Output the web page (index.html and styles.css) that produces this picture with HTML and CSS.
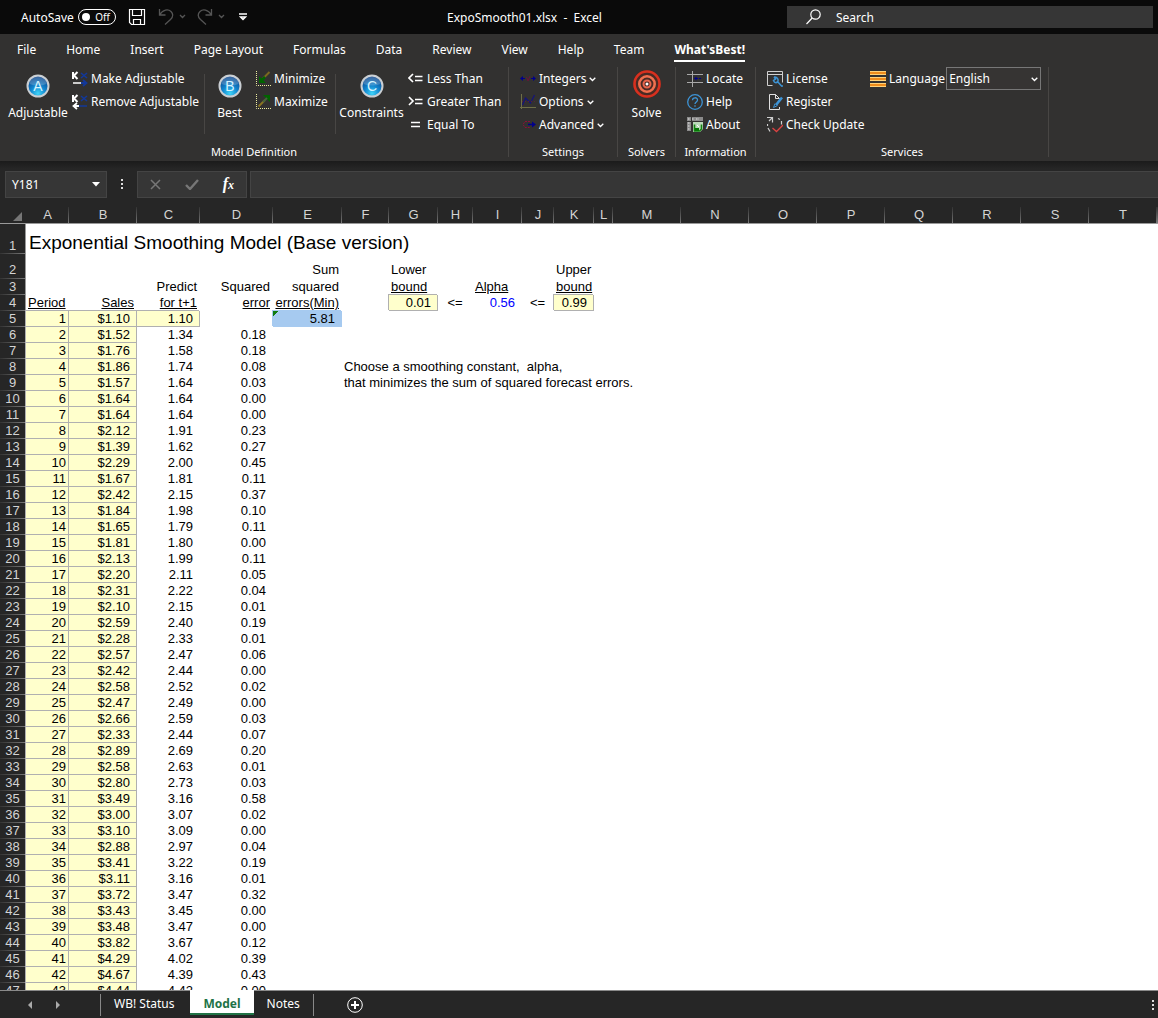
FILE: index.html
```html
<!DOCTYPE html>
<html lang="en">
<head>
  <meta charset="UTF-8">
  <title>ExpoSmooth01.xlsx - Excel</title>
  <link rel="stylesheet" href="styles.css">
</head>
<body>
<header class="titlebar">
  <div class="quick-access">
    <span>AutoSave</span>
    <button class="toggle" aria-label="AutoSave off"><span class="knob"></span>Off</button>
    <button class="icon-btn" aria-label="Save">
      <svg width="18" height="18" viewBox="0 0 18 18" fill="none" stroke="#fff" stroke-width="1.2"><path d="M1.5 1.5h15v15h-13l-2-2zM4.5 1.5v6h9v-6M5.500 16.500v-5h7v5"/></svg>
    </button>
    <button class="icon-btn undo" aria-label="Undo">
      <svg width="28" height="18" viewBox="0 0 28 18" fill="none" stroke="#555" stroke-width="1.3"><path d="M1.500 1v6h6M1.500 7C5 1.500 10 .8 13 3.500c3 3 1.500 6-.5 8L7 16.500M22 7l2.500 2.500L27 7"/></svg>
    </button>
    <button class="icon-btn redo" aria-label="Redo">
      <svg width="28" height="18" viewBox="0 0 28 18" fill="none" stroke="#555" stroke-width="1.3"><path d="M14.500 1v6h-6M14.500 7C11 1.500 6 .8 3 3.500c-3 3-1.500 6 .5 8L9 16.500M22 7l2.500 2.500L27 7"/></svg>
    </button>
    <button class="icon-btn" aria-label="Customize Quick Access Toolbar">
      <svg width="8" height="8" viewBox="0 0 8 8" fill="none" stroke="#fff" stroke-width="1.3"><path d="M0 1h8M1.500 4L4 6.500 6.500 4z"/></svg>
    </button>
  </div>
  <div class="doc-name">ExpoSmooth01.xlsx&nbsp; -&nbsp; Excel</div>
  <label class="search">
    <svg width="16" height="16" viewBox="0 0 16 16" fill="none" stroke="#fff" stroke-width="1.2"><circle cx="9.500" cy="5.500" r="4.700"/><path d="M6.200 9L.5 15"/></svg>
    <input type="text" placeholder="Search" aria-label="Search">
  </label>
</header>

<section class="ribbon">
  <nav class="tabs">
    <a href="#">File</a>
    <a href="#">Home</a>
    <a href="#">Insert</a>
    <a href="#">Page Layout</a>
    <a href="#">Formulas</a>
    <a href="#">Data</a>
    <a href="#">Review</a>
    <a href="#">View</a>
    <a href="#">Help</a>
    <a href="#">Team</a>
    <a href="#" class="active">What'sBest!</a>
  </nav>
  <div class="groups">
    <div class="group model">
      <div class="parts">
        <div class="part adjustable">
          <button class="big">
            <svg width="24" height="24" viewBox="0 0 24 24">
              <defs>
                <radialGradient id="orb" cx=".5" cy=".85" r=".8">
                  <stop offset="0" stop-color="#3fd4f8"/>
                  <stop offset=".45" stop-color="#1186cf"/>
                  <stop offset="1" stop-color="#0a3f86"/>
                </radialGradient>
              </defs>
              <circle cx="12" cy="12" r="10.500" fill="url(#orb)" stroke="#c9ced2" stroke-width="2"/>
              <path d="M3.500 10a8.500 8.500 0 0 1 17 0q-8.500 3-17 0z" fill="#fff" opacity=".2"/>
              <text class="orb-letter" x="12" y="17">A</text>
            </svg>
            Adjustable
          </button>
          <div class="smalls">
            <button class="small">
              <svg width="16" height="16" viewBox="0 0 16 16" fill="none"><path d="M1 1v7M5.500 1L2 4.500 5.500 8" stroke="#fff" stroke-width="2"/><path d="M9 2l6 5M15 2L9 7" stroke="#12389a" stroke-width="1.600"/><path d="M1 12h9" stroke="#fff" stroke-width="1.500"/><path d="M9 12h5M11 9l3.500 3-3.500 3" stroke="#12389a" stroke-width="1.800"/></svg>
              Make Adjustable
            </button>
            <button class="small">
              <svg width="16" height="16" viewBox="0 0 16 16" fill="none"><path d="M1 1v7M5.500 1L2 4.500 5.500 8" stroke="#fff" stroke-width="2"/><path d="M9 2l6 5M15 2L9 7" stroke="#12389a" stroke-width="1.600"/><path d="M7 12h8" stroke="#12389a" stroke-width="1.500"/><path d="M7 12H2M5 9l-3.500 3L5 15" stroke="#fff" stroke-width="1.800"/></svg>
              Remove Adjustable
            </button>
          </div>
        </div>
        <div class="part best">
          <button class="big">
            <svg width="24" height="24" viewBox="0 0 24 24">
              <circle cx="12" cy="12" r="10.500" fill="url(#orb)" stroke="#c9ced2" stroke-width="2"/>
              <path d="M3.500 10a8.500 8.500 0 0 1 17 0q-8.500 3-17 0z" fill="#fff" opacity=".2"/>
              <text class="orb-letter" x="12" y="17">B</text>
            </svg>
            Best
          </button>
          <div class="smalls">
            <button class="small">
              <svg width="16" height="16" viewBox="0 0 16 16" fill="none"><path d="M1.500 0v14.500H16" stroke="#eeeea0" stroke-dasharray="1 1"/><path d="M14.500 1L8 7.500" stroke="#7a6a20" stroke-width="2"/><path d="M4 5v7h7z" fill="#006400"/><path d="M10 6L6 10" stroke="#006400" stroke-width="2.500"/></svg>
              Minimize
            </button>
            <button class="small">
              <svg width="16" height="16" viewBox="0 0 16 16" fill="none"><path d="M1.500 0v14.500H16" stroke="#eeeea0" stroke-dasharray="1 1"/><path d="M3.500 12.500L10 6" stroke="#8a7420" stroke-width="2"/><path d="M8 1h7v7z" fill="#006400"/><path d="M8 8l4-4" stroke="#45633a" stroke-width="2"/></svg>
              Maximize
            </button>
          </div>
        </div>
        <div class="part constraints">
          <button class="big">
            <svg width="24" height="24" viewBox="0 0 24 24">
              <circle cx="12" cy="12" r="10.500" fill="url(#orb)" stroke="#c9ced2" stroke-width="2"/>
              <path d="M3.500 10a8.500 8.500 0 0 1 17 0q-8.500 3-17 0z" fill="#fff" opacity=".2"/>
              <text class="orb-letter" x="12" y="17">C</text>
            </svg>
            Constraints
          </button>
          <div class="smalls">
            <button class="small">
              <svg width="16" height="16" viewBox="0 0 16 16" fill="none" stroke="#fff" stroke-width="1.700"><path d="M5 3L1 7l4 4M7 5.500h7.500M7 9.500h7.500"/></svg>
              Less Than
            </button>
            <button class="small">
              <svg width="16" height="16" viewBox="0 0 16 16" fill="none" stroke="#fff" stroke-width="1.700"><path d="M1 3l4 4-4 4M7 5.500h7.500M7 9.500h7.500"/></svg>
              Greater Than
            </button>
            <button class="small">
              <svg width="16" height="16" viewBox="0 0 16 16" fill="none" stroke="#fff" stroke-width="1.700"><path d="M3 5.500h9M3 9.500h9"/></svg>
              Equal To
            </button>
          </div>
        </div>
      </div>
      <div class="group-name">Model Definition</div>
    </div>

    <div class="group settings">
      <div class="smalls">
        <button class="small">
          <svg width="16" height="16" viewBox="0 0 16 16"><path d="M0 7.500L3 5v5zM16 7.500L13 5v5z" fill="#00008b"/><path d="M3 7.500h2M11 7.500h2" stroke="#00008b"/><path d="M6.500 6l1.500 4 2-5" fill="none" stroke="#6a1438"/></svg>
          Integers
          <svg class="chev" width="7" height="5" viewBox="0 0 7 5"><path d="M.7.7l2.800 2.800L6.300.7" fill="none" stroke="#fff" stroke-width="1.300"/></svg>
        </button>
        <button class="small">
          <svg width="16" height="16" viewBox="0 0 16 16" fill="none"><path d="M1.500 0v15M0 13.500h16" stroke="#6f6f48"/><path d="M2.500 11l3-7 5 5 4-8" stroke="#14147d" stroke-width="1.200"/><path d="M2 7.500h14" stroke="#5a2038" stroke-dasharray="1 2"/></svg>
          Options
          <svg class="chev" width="7" height="5" viewBox="0 0 7 5"><path d="M.7.7l2.800 2.800L6.300.7" fill="none" stroke="#fff" stroke-width="1.300"/></svg>
        </button>
        <button class="small">
          <svg width="16" height="16" viewBox="0 0 16 16"><path d="M10 4.500H5L3 7.500l2 3h5" fill="none" stroke="#8b1038" stroke-dasharray="2 1"/><path d="M8 7.500h5" stroke="#00008b" stroke-width="1.500"/><path d="M12 4.500l4 3-4 3z" fill="#00008b"/></svg>
          Advanced
          <svg class="chev" width="7" height="5" viewBox="0 0 7 5"><path d="M.7.7l2.800 2.800L6.300.7" fill="none" stroke="#fff" stroke-width="1.300"/></svg>
        </button>
      </div>
      <div class="group-name">Settings</div>
    </div>

    <div class="group solvers">
      <button class="big">
        <svg width="28" height="28" viewBox="0 0 28 28" fill="none">
          <circle cx="14" cy="14" r="14" fill="#4a2a24"/>
          <circle cx="14" cy="14" r="12.500" stroke="#d8301f" stroke-width="2.600"/>
          <circle cx="14" cy="14" r="7.700" stroke="#f0704f" stroke-width="2.600"/>
          <circle cx="14" cy="14" r="3.500" stroke="#e8654c" stroke-width="2"/>
          <circle cx="14" cy="14" r="1.500" fill="#fff"/>
        </svg>
        Solve
      </button>
      <div class="group-name">Solvers</div>
    </div>

    <div class="group information">
      <div class="smalls">
        <button class="small">
          <svg width="16" height="16" viewBox="0 0 16 16" fill="none"><path d="M0 3.500h16M0 11.500h16M5.500 0v16" stroke="#a8a8a8"/><path d="M7 7.500l2.500-2v4z" fill="#00008b"/><path d="M9 7.500h6" stroke="#00008b" stroke-dasharray="2 1"/></svg>
          Locate
        </button>
        <button class="small">
          <svg width="16" height="16" viewBox="0 0 16 16" fill="none" stroke="#3d94d6" stroke-width="1.300"><circle cx="8" cy="8" r="7.300"/><path d="M5.500 6.200C5.500 3 10.500 3 10.500 6c0 1.900-2.500 2-2.500 4M8 11.300v1.400"/></svg>
          Help
        </button>
        <button class="small">
          <svg width="16" height="16" viewBox="0 0 16 16" fill="none"><path d="M0 0h16v4H5v10H0z" fill="#8b8b8b"/><path d="M1 2h2M5 2h2M9 2h3M1 6h2M1 9h2M1 12h2" stroke="#e4e4e4" stroke-dasharray="1 .5"/><path d="M4.500 0v14M0 4.500h5" stroke="#333"/><path d="M6 5h10v7l-3 3H6z" fill="#b9d9b9"/><path d="M7.500 7.500v6.500h5l2-2V7.500" stroke="#128312" stroke-width="1.600"/><path d="M8 11h4v3H8z" fill="#067806"/><path d="M10 8l2 2" stroke="#fff"/></svg>
          About
        </button>
      </div>
      <div class="group-name">Information</div>
    </div>

    <div class="group services">
      <div class="parts">
        <div class="smalls">
          <button class="small">
            <svg width="16" height="16" viewBox="0 0 16 16" fill="none"><path d="M5.500 14.500h-5v-14h15v11M.5 3.500h15" stroke="#cfcfcf"/><path d="M10 10l5 5.500M14 15h2M7 6l1.500 2-2 1.500c1 3 4 2.500 4.500.5s-1-4-4-4" stroke="#3d94d6" stroke-width="1.500"/></svg>
            License
          </button>
          <button class="small">
            <svg width="16" height="16" viewBox="0 0 16 16" fill="none"><path d="M12.500 5V4.500l-4-4h-6v15h10V13M8.500.5v4H12" stroke="#e0e0e0"/><path d="M15 3.500L9 11" stroke="#3d94d6" stroke-width="2.600"/><path d="M8 9.500l-1.500 4 4-2" stroke="#3d94d6"/></svg>
            Register
          </button>
          <button class="small">
            <svg width="16" height="16" viewBox="0 0 16 16" fill="none"><path d="M0 .5h5.500v5M5 1L2 4M.5 7v2M1 11l2 3.500M11 1.500l2 1M14.500 4v3.500" stroke="#cfcfcf" stroke-width="1.200"/><path d="M5.500 11l4 3.500L16 8" stroke="#dc4242" stroke-width="1.300"/></svg>
            Check Update
          </button>
        </div>
        <div class="language">
          <label for="lang">
            <svg width="16" height="16" viewBox="0 0 16 16"><path d="M0 0h16v4H0zM0 6h16v4H0zM0 12h16v4H0z" fill="#ffd27a"/><path d="M0 1h16v2H0zM0 7h16v2H0zM0 13h16v2H0z" fill="#ee8c1c"/></svg>
            Language
          </label>
          <span class="select-wrap">
            <select id="lang"><option>English</option></select>
            <svg class="select-chev" width="7" height="5" viewBox="0 0 7 5"><path d="M.7.7l2.800 2.800L6.300.7" fill="none" stroke="#fff" stroke-width="1.300"/></svg>
          </span>
        </div>
      </div>
      <div class="group-name">Services</div>
    </div>
  </div>
</section>

<section class="formula-bar">
  <button class="name-box">Y181
    <svg width="8" height="5" viewBox="0 0 8 5"><path d="M0 0h8L4 4.500z" fill="#fff"/></svg>
  </button>
  <svg class="grip" width="2" height="10" viewBox="0 0 2 10"><path d="M0 0h2v2H0zM0 4h2v2H0zM0 8h2v2H0z" fill="#ddd"/></svg>
  <div class="fx-buttons">
    <button class="icon-btn" aria-label="Cancel">
      <svg width="11" height="11" viewBox="0 0 11 11"><path d="M1 1l9 9M10 1l-9 9" stroke="#777" stroke-width="1.500"/></svg>
    </button>
    <button class="icon-btn" aria-label="Enter">
      <svg width="14" height="11" viewBox="0 0 14 11"><path d="M1 6l4 4 8-9" fill="none" stroke="#777" stroke-width="2.400"/></svg>
    </button>
    <button class="icon-btn fx" aria-label="Insert Function">f<span>x</span></button>
  </div>
  <input class="formula" type="text" aria-label="Formula">
</section>

<main class="sheet">
  <table id="grid">
    <colgroup>
      <col class="c-head"><col class="c-a"><col class="c-b"><col class="c-c"><col class="c-d"><col class="c-e">
      <col class="c-f"><col class="c-g"><col class="c-h"><col class="c-i"><col class="c-j"><col class="c-k"><col class="c-l">
      <col class="c-std"><col class="c-std"><col class="c-std"><col class="c-std"><col class="c-std"><col class="c-std"><col class="c-std"><col class="c-std"><col>
    </colgroup>
    <thead>
      <tr>
        <th class="corner"><svg width="9" height="9" viewBox="0 0 9 9"><path d="M9 0v9H0z" fill="#767676"/></svg></th>
        <th>A</th><th>B</th><th>C</th><th>D</th><th>E</th><th>F</th><th>G</th><th>H</th><th>I</th><th>J</th><th>K</th><th>L</th>
        <th>M</th><th>N</th><th>O</th><th>P</th><th>Q</th><th>R</th><th>S</th><th>T</th><th></th>
      </tr>
    </thead>
    <tbody id="rows">
      <tr class="row-title"><th>1</th><td colspan="8" class="title">Exponential Smoothing Model (Base version)</td><td colspan="13"></td></tr>
      <tr class="row-tall"><th>2</th><td></td><td></td><td></td><td></td><td class="r">Sum</td><td></td><td>Lower</td><td></td><td></td><td></td><td>Upper</td><td colspan="10"></td></tr>
      <tr><th>3</th><td></td><td></td><td class="r">Predict</td><td class="r">Squared</td><td class="r">squared</td><td></td><td><u>bound</u></td><td></td><td><u>Alpha</u></td><td></td><td><u>bound</u></td><td colspan="10"></td></tr>
      <tr><th>4</th><td><u>Period</u></td><td class="r"><u>Sales</u></td><td class="r"><u>for t+1</u></td><td class="r"><u>error</u></td><td class="r"><u>errors(Min)</u></td><td></td><td class="num input">0.01</td><td class="op">&lt;=</td><td class="num alpha">0.56</td><td class="op">&lt;=</td><td class="num input">0.99</td><td colspan="10"></td></tr>
    </tbody>
  </table>
</main>

<footer class="sheet-tabs">
  <div class="tab-arrows">
    <button class="icon-btn" aria-label="Previous sheet"><svg width="4" height="8" viewBox="0 0 4 8"><path d="M4 0v8L0 4z" fill="#aaa"/></svg></button>
    <button class="icon-btn" aria-label="Next sheet"><svg width="4" height="8" viewBox="0 0 4 8"><path d="M0 0v8l4-4z" fill="#aaa"/></svg></button>
  </div>
  <a href="#" class="sheet-tab first">WB! Status</a>
  <a href="#" class="sheet-tab current">Model</a>
  <a href="#" class="sheet-tab last">Notes</a>
  <button class="icon-btn add" aria-label="New sheet">
    <svg width="16" height="16" viewBox="0 0 16 16" fill="none" stroke="#fff"><circle cx="8" cy="8" r="7.300"/><path d="M8 4v8M4 8h8" stroke-width="2"/></svg>
  </button>
  <svg class="end-grip" width="2" height="10" viewBox="0 0 2 10"><path d="M0 0h2v2H0zM0 4h2v2H0zM0 8h2v2H0z" fill="#ddd"/></svg>
</footer>
<script src="script.js"></script>
</body>
</html>
```
FILE: styles.css
```css
* {
  box-sizing: border-box;
}
body {
  margin: 0;
  height: 100vh;
  display: flex;
  flex-direction: column;
  overflow: hidden;
  background: #262626;
  color: #fff;
  font-family: "Noto Sans", "Open Sans", sans-serif;
  font-size: 12px;
}
button, input, select {
  font: inherit;
  color: inherit;
  background: none;
  border: none;
  padding: 0;
  margin: 0;
}
a {
  color: inherit;
  text-decoration: none;
}
svg {
  display: block;
  flex: none;
}

/* title bar */
.titlebar {
  display: grid;
  grid-template-columns: 447px 340px 1fr;
  align-items: center;
  flex: none;
  height: 34px;
  padding-right: 5px;
  background: #0a0a0a;
}
.quick-access {
  display: flex;
  align-items: center;
  padding-left: 21px;
}
.toggle {
  display: flex;
  align-items: center;
  justify-content: space-between;
  width: 38px;
  height: 16px;
  margin: 0 12px 0 4px;
  padding: 0 5px 0 3px;
  border: 1px solid #fff;
  border-radius: 8px;
  font-size: 10px;
}
.knob {
  width: 8px;
  height: 8px;
  border-radius: 50%;
  background: #fff;
}
.undo {
  margin-left: 12px;
}
.redo {
  margin: 0 14px 0 11px;
}
.search {
  display: flex;
  align-items: center;
  gap: 14px;
  height: 22px;
  padding-left: 19px;
  background: #363636;
}
.search input {
  flex: 1;
  outline: none;
}
.search input::placeholder {
  color: #fff;
  opacity: 1;
}

/* ribbon */
.ribbon {
  flex: none;
  background: #323130;
}
.tabs {
  display: flex;
  gap: 30px;
  height: 28px;
  padding-left: 17px;
  line-height: 32px;
}
.tabs .active {
  font-weight: bold;
  border-bottom: 2px solid #fff;
}
.groups {
  display: flex;
  height: 99px;
  padding-top: 5px;
}
.group {
  display: flex;
  flex-direction: column;
  height: 90px;
  border-right: 1px solid #484644;
}
.group-name {
  margin-top: auto;
  line-height: 10px;
  font-size: 11px;
  text-align: center;
}
.parts {
  display: flex;
}
.part {
  display: flex;
}
.part + .part {
  position: relative;
}
.part + .part::before {
  content: "";
  position: absolute;
  left: 0;
  top: 7px;
  width: 1px;
  height: 60px;
  background: #484644;
}
.model {
  width: 509px;
}
.adjustable {
  width: 204px;
}
.best {
  width: 131px;
}
.constraints {
  width: 173px;
}
.settings {
  width: 109px;
  padding-left: 11px;
}
.settings .group-name {
  margin-left: -11px;
}
.solvers {
  width: 58px;
}
.information {
  width: 80px;
}
.information .smalls {
  padding-left: 11px;
}
.services {
  width: 293px;
}
.services .smalls {
  width: 114px;
  padding-left: 11px;
}
.big {
  display: flex;
  flex-direction: column;
  align-items: center;
  justify-content: flex-end;
  height: 54px;
  line-height: 16px;
  gap: 7px;
}
.adjustable .big {
  width: 76px;
}
.adjustable .smalls {
  margin-left: -4px;
}
.best .big {
  width: 51px;
}
.constraints .big {
  width: 73px;
}
.orb-letter {
  font-family: "Liberation Sans", sans-serif;
  font-size: 14px;
  fill: #d5f4ff;
  text-anchor: middle;
}
.small, .language label {
  display: flex;
  align-items: center;
  gap: 3px;
  height: 23px;
  white-space: nowrap;
}
.chev {
  margin-top: 1px;
}
.language {
  display: flex;
  gap: 1px;
}
.select-wrap {
  position: relative;
}
.select-wrap select {
  width: 95px;
  height: 23px;
  padding-left: 2px;
  border: 1px solid #777;
  background: #363433;
  appearance: none;
}
.select-chev {
  position: absolute;
  right: 3px;
  top: 10px;
}

/* formula bar */
.formula-bar {
  display: flex;
  align-items: center;
  flex: none;
  height: 46px;
  padding-left: 5px;
  background: linear-gradient(#1b1b1b, #262626 8px);
}
.name-box, .fx-buttons, .formula {
  height: 27px;
  border: 1px solid #444;
  background: #363636;
}
.name-box {
  display: flex;
  align-items: center;
  justify-content: space-between;
  width: 102px;
  padding: 0 6px;
}
.grip {
  margin: 0 14px;
}
.fx-buttons {
  display: flex;
  align-items: center;
  justify-content: space-between;
  width: 110px;
  margin-right: 3px;
  padding: 0 12px;
}
.fx {
  font-family: "Liberation Serif", serif;
  font-style: italic;
  font-weight: bold;
  font-size: 16px;
}
.fx span {
  font-size: 12px;
}
.formula {
  flex: 1;
  border-right: none;
}

/* worksheet */
.sheet {
  flex: 1;
  min-height: 0;
  overflow: hidden;
  background: #fff;
  font-family: "Liberation Sans", Arial, sans-serif;
  font-size: 13px;
  color: #000;
}
table {
  width: 100%;
  table-layout: fixed;
  border-collapse: separate;
  border-spacing: 0;
}
.c-head { width: 26px; }
.c-a { width: 43px; }
.c-b { width: 68px; }
.c-c { width: 63px; }
.c-d { width: 73px; }
.c-e { width: 69px; }
.c-f { width: 47px; }
.c-g { width: 49px; }
.c-h { width: 35px; }
.c-i { width: 49px; }
.c-j { width: 32px; }
.c-k { width: 40px; }
.c-l { width: 19px; }
.c-std { width: 68px; }
th {
  padding: 0;
  background: #262626;
  color: #d4d4d4;
  font-weight: normal;
}
thead th {
  height: 17px;
  line-height: 16px;
  border-bottom: 1px solid #999;
  background: linear-gradient(#333, #777) right / 1px 100% no-repeat #262626;
}
thead .corner {
  background: #262626;
}
.corner svg {
  margin: 3px 0 0 13px;
}
tbody th {
  height: 16px;
  padding-bottom: 1px;
  line-height: 15px;
  vertical-align: bottom;
  border-right: 1px solid #999;
  background: linear-gradient(90deg, #333, #777) bottom / 100% 1px no-repeat #262626;
}
td {
  height: 16px;
  padding: 0 3px 0 2px;
  line-height: 15px;
  vertical-align: bottom;
  white-space: nowrap;
  border-bottom: 1px solid transparent;
}
.row-title td, .row-title th {
  height: 30px;
}
.row-tall td, .row-tall th {
  height: 25px;
  padding-bottom: 1px;
}
.row-tall th {
  padding-bottom: 2px;
}
td.title {
  padding-left: 3px;
  font-size: 19px;
  line-height: 20px;
}
.r {
  text-align: right;
}
.num {
  text-align: right;
  padding-right: 7px;
}
.op {
  text-align: center;
}
.alpha {
  color: #00f;
}
.input {
  background: #ffffcc;
  border-right: 1px solid #b0b0b0;
  border-bottom: 1px solid #b0b0b0;
  box-shadow: -1px -1px 0 #b0b0b0;
}
.num.input {
  padding-right: 6px;
}
.num.period {
  padding-right: 2px;
}
.goal {
  background: linear-gradient(135deg, #107c10 4px, transparent 4px) no-repeat #a6caf0;
  border-bottom-color: #a6caf0;
  box-shadow: -1px -1px 0 #a6caf0;
}

/* sheet tabs */
.sheet-tabs {
  display: flex;
  flex: none;
  height: 28px;
  align-items: center;
  border-top: 1px solid #8a8a8a;
}
.tab-arrows {
  display: flex;
  gap: 24px;
  width: 100px;
  padding-left: 28px;
}
.sheet-tab {
  height: 22px;
  line-height: 20px;
  padding: 0 13px;
}
.first {
  padding-right: 16px;
  border-left: 1px solid #888;
}
.last {
  border-right: 1px solid #888;
}
.current {
  align-self: flex-start;
  height: 25px;
  margin-top: -1px;
  line-height: 27px;
  background: #fff;
  color: #217346;
  font-weight: bold;
  border-bottom: 2px solid #217346;
}
.add {
  margin-left: 33px;
}
.end-grip {
  margin: 0 4px 0 auto;
}
```
FILE: script.js
```js
// [sales, prediction for t+1, squared error], starting at period 1
const data = [
  ["1.10", "1.10", ""],
  ["1.52", "1.34", "0.18"],
  ["1.76", "1.58", "0.18"],
  ["1.86", "1.74", "0.08"],
  ["1.57", "1.64", "0.03"],
  ["1.64", "1.64", "0.00"],
  ["1.64", "1.64", "0.00"],
  ["2.12", "1.91", "0.23"],
  ["1.39", "1.62", "0.27"],
  ["2.29", "2.00", "0.45"],
  ["1.67", "1.81", "0.11"],
  ["2.42", "2.15", "0.37"],
  ["1.84", "1.98", "0.10"],
  ["1.65", "1.79", "0.11"],
  ["1.81", "1.80", "0.00"],
  ["2.13", "1.99", "0.11"],
  ["2.20", "2.11", "0.05"],
  ["2.31", "2.22", "0.04"],
  ["2.10", "2.15", "0.01"],
  ["2.59", "2.40", "0.19"],
  ["2.28", "2.33", "0.01"],
  ["2.57", "2.47", "0.06"],
  ["2.42", "2.44", "0.00"],
  ["2.58", "2.52", "0.02"],
  ["2.47", "2.49", "0.00"],
  ["2.66", "2.59", "0.03"],
  ["2.33", "2.44", "0.07"],
  ["2.89", "2.69", "0.20"],
  ["2.58", "2.63", "0.01"],
  ["2.80", "2.73", "0.03"],
  ["3.49", "3.16", "0.58"],
  ["3.00", "3.07", "0.02"],
  ["3.10", "3.09", "0.00"],
  ["2.88", "2.97", "0.04"],
  ["3.41", "3.22", "0.19"],
  ["3.11", "3.16", "0.01"],
  ["3.72", "3.47", "0.32"],
  ["3.43", "3.45", "0.00"],
  ["3.48", "3.47", "0.00"],
  ["3.82", "3.67", "0.12"],
  ["4.29", "4.02", "0.39"],
  ["4.67", "4.39", "0.43"],
  ["4.44", "4.42", "0.00"]
];

const notes = {
  8: "Choose a smoothing constant,&nbsp; alpha,",
  9: "that minimizes the sum of squared forecast errors."
};

const rows = document.getElementById("rows");
let html = "";

data.forEach(([sales, predict, error], i) => {
  const row = i + 5;
  const first = i === 0;
  html += `<tr><th>${row}</th>
    <td class="num input period">${i + 1}</td>
    <td class="num input">$${sales}</td>
    <td class="num${first ? " input" : ""}">${predict}</td>
    <td class="num">${error}</td>
    <td class="num${first ? " goal" : ""}">${first ? "5.81" : ""}</td>
    <td colspan="16">${notes[row] || ""}</td></tr>`;
});

rows.insertAdjacentHTML("beforeend", html);
```
